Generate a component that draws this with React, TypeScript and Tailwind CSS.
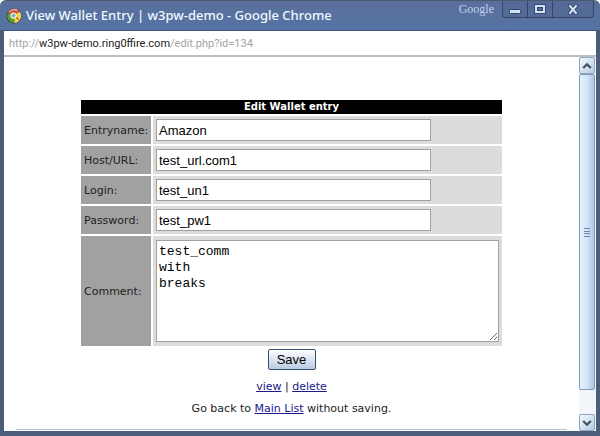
import { type FormEvent, useState } from "react";

type EntryField = "entryname" | "host" | "login" | "password";

type WalletEntry = Record<EntryField, string> & {
  comment: string;
};

type FieldOption = {
  id: EntryField;
  label: string;
};

const fields: FieldOption[] = [
  { id: "entryname", label: "Entryname:" },
  { id: "host", label: "Host/URL:" },
  { id: "login", label: "Login:" },
  { id: "password", label: "Password:" },
];

const linkClass = "text-[#1a1a8c] underline";

function ChromeLogo() {
  return (
    <svg width="16" height="16" viewBox="0 0 16 16" aria-hidden="true">
      <circle cx="8" cy="8" r="7.6" fill="#2c3530" />
      <path d="M8 8 1.8 5A7 7 0 0 1 13.4 3.4z" fill="#d0503c" />
      <path d="M8 8 13.4 3.4A7 7 0 0 1 8.4 15z" fill="#f2d648" />
      <path d="M8 8 8.4 15A7 7 0 0 1 1.8 5z" fill="#57a03a" />
      <path d="M3 4A6.5 6.5 0 0 1 11.6 2.6" fill="none" stroke="#f2b09c" strokeWidth="1.4" />
      <path d="M6 6 12.8 11.6" stroke="#b83a2c" strokeWidth="1.2" />
      <circle cx="7.6" cy="7.6" r="3.2" fill="#f4f0d0" />
      <circle cx="7.6" cy="7.6" r="2" fill="#8fb0bc" />
    </svg>
  );
}

function TitleBar() {
  return (
    <header className="flex h-[30px] shrink-0 items-start rounded-t-md border-t border-[#4a5a72] bg-linear-to-b from-[#596f9a] to-[#5673a4] px-[6px]">
      <div className="flex h-[29px] items-center gap-1">
        <ChromeLogo />
        <h1 className="whitespace-nowrap font-['Noto_Sans'] text-[13px] font-medium text-[#eefaff]">
          View Wallet Entry | w3pw-demo - Google Chrome
        </h1>
      </div>
      <span className="ml-auto mr-2 font-['Liberation_Serif'] text-[12px] leading-4 text-[#c3d2ee]">Google</span>
      <div className="flex h-[17px] rounded-b-sm border border-t-0 border-[#354566] bg-[#546b98]">
        <button type="button" aria-label="Minimize" className="flex w-[25px] items-center justify-center border-r border-[#354566]">
          <svg width="12" height="5" viewBox="0 0 12 5" className="mt-1">
            <rect x="0.5" y="0.5" width="11" height="4" rx="1" fill="#d5e1f4" stroke="#34476b" />
          </svg>
        </button>
        <button type="button" aria-label="Maximize" className="flex w-[25px] items-center justify-center border-r border-[#354566]">
          <svg width="12" height="10" viewBox="0 0 12 10">
            <rect x="0.5" y="0.5" width="11" height="9" fill="#d5e1f4" stroke="#34476b" />
            <rect x="3.5" y="3.5" width="5" height="3" fill="#546b98" stroke="#34476b" />
          </svg>
        </button>
        <button type="button" aria-label="Close" className="flex w-10 items-center justify-center">
          <svg width="12" height="11" viewBox="0 0 12 11" fill="none" strokeLinecap="square">
            <path d="M3 2 9 9M9 2 3 9" stroke="#34476b" strokeWidth="4" />
            <path d="M3 2 9 9M9 2 3 9" stroke="#d5e1f4" strokeWidth="2" />
          </svg>
        </button>
      </div>
    </header>
  );
}

function ScrollArrow({ direction }: { direction: "up" | "down" }) {
  return (
    <button
      type="button"
      aria-label={`Scroll ${direction}`}
      className="flex h-[17px] w-4 shrink-0 items-center justify-center rounded-xs border border-[#93a5b8] bg-linear-to-br from-[#f4f9fe] to-[#b5cce4]"
    >
      <svg width="10" height="8" viewBox="0 0 10 8" fill="none" stroke="#40505f" strokeWidth="2.2">
        <path d={direction === "up" ? "M1.2 6 5 2.2 8.8 6" : "M1.2 2 5 5.8 8.8 2"} />
      </svg>
    </button>
  );
}

function Scrollbar() {
  return (
    <div className="flex w-[17px] shrink-0 flex-col bg-[#f2f6fc] pr-px">
      <ScrollArrow direction="up" />
      <div className="flex flex-[315_1_0%] items-center justify-center rounded-xs border border-[#8196b0] bg-linear-to-r from-[#e4f2fd] via-[#d3e5f6] to-[#aec6e0]">
        <svg width="6" height="9" viewBox="0 0 6 9" stroke="#7187a3">
          <path d="M0 .5h6M0 3.5h6M0 5.5h6M0 8.5h6" />
        </svg>
      </div>
      <div className="flex-[24_1_0%]" />
      <ScrollArrow direction="down" />
    </div>
  );
}

export default function App() {
  const [entry, setEntry] = useState<WalletEntry>({
    entryname: "Amazon",
    host: "test_url.com1",
    login: "test_un1",
    password: "test_pw1",
    comment: "test_comm\nwith\nbreaks",
  });

  const handleSubmit = (event: FormEvent<HTMLFormElement>) => {
    event.preventDefault();
  };

  return (
    <div className="flex min-h-screen flex-col bg-white">
      <TitleBar />
      <div className="flex flex-1 flex-col border-x-4 border-b-[5px] border-[#4c5c7b]">
        <div className="flex h-[27px] shrink-0 items-center border-b-2 border-t border-b-[#b9c2c2] border-t-[#3f5275] px-[5px] pt-[3px] font-[Roboto] text-[11px] text-[#a3a3a3]">
          <span>
            http://<span className="text-[#222]">w3pw-demo.ring0ffire.com</span>/edit.php?id=134
          </span>
        </div>

        <div className="flex flex-1">
          <main className="flex flex-1 flex-col px-3 pt-[41px] font-['DejaVu_Sans'] text-[11px] leading-3 text-[#222]">
            <form onSubmit={handleSubmit} className="flex flex-col items-center">
              <table className="w-[425px] table-fixed border-separate border-spacing-[2px]">
                <colgroup>
                  <col className="w-[70px]" />
                  <col />
                </colgroup>
                <thead>
                  <tr>
                    <th colSpan={2} className="bg-black p-px text-[10px] font-bold text-white">
                      Edit Wallet entry
                    </th>
                  </tr>
                </thead>
                <tbody>
                  {fields.map((field) => (
                    <tr key={field.id}>
                      <td className="bg-[#a1a1a1] px-[3px] pt-[2px]">
                        <label htmlFor={field.id}>{field.label}</label>
                      </td>
                      <td className="bg-[#dcdcdc] p-[3px]">
                        <input
                          id={field.id}
                          type="text"
                          value={entry[field.id]}
                          onChange={(event) => setEntry((prev) => ({ ...prev, [field.id]: event.target.value }))}
                          className="block h-[22px] w-[275px] border border-[#a0a0a0] bg-white px-[2px] font-['Liberation_Sans'] text-[13px] text-black"
                        />
                      </td>
                    </tr>
                  ))}
                  <tr>
                    <td className="bg-[#a1a1a1] px-[3px] pt-[2px]">
                      <label htmlFor="comment">Comment:</label>
                    </td>
                    <td className="bg-[#dcdcdc] px-[3px] py-1">
                      <textarea
                        id="comment"
                        value={entry.comment}
                        onChange={(event) => setEntry((prev) => ({ ...prev, comment: event.target.value }))}
                        className="block h-[102px] w-full resize border border-[#a0a0a0] bg-white px-[2px] py-[3px] font-['Liberation_Mono'] text-[13px] leading-4 text-black"
                      />
                    </td>
                  </tr>
                </tbody>
              </table>
              <button
                type="submit"
                className="mt-px h-[21px] w-12 rounded-xs border border-[#34506e] bg-linear-to-b from-white to-[#b9cbe2] font-['Liberation_Sans'] text-[13px] text-black"
              >
                Save
              </button>
            </form>
            <p className="mt-[11px] text-center">
              <a href="#view" className={linkClass}>
                view
              </a>
              {" | "}
              <a href="#delete" className={linkClass}>
                delete
              </a>
            </p>
            <p className="mt-[10px] text-center">
              Go back to{" "}
              <a href="#list" className={linkClass}>
                Main List
              </a>{" "}
              without saving.
            </p>
            <hr className="mb-px mt-auto border-[#b4bfd0]" />
          </main>
          <Scrollbar />
        </div>
      </div>
    </div>
  );
}
